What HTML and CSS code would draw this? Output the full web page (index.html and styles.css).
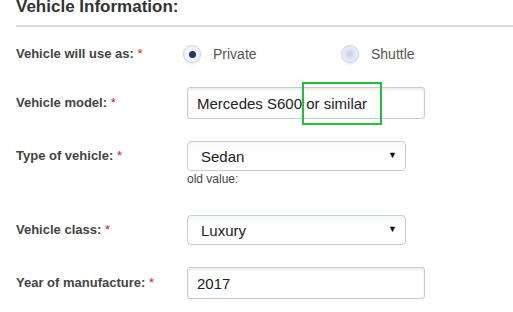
FILE: index.html
```html
<!DOCTYPE html>
<html lang="en">
<head>
    <meta charset="UTF-8">
    <meta name="viewport" content="width=device-width, initial-scale=1.0">
    <title>Vehicle Information</title>
    <link rel="stylesheet" href="styles.css">
</head>
<body>
    <div class="section">
        <h2 class="section-title">Vehicle Information:</h2>
        <div class="section-rule"></div>

        <div class="form-row row-radio">
            <label class="form-label">Vehicle will use as: <span class="req">*</span></label>
            <div class="radio-group">
                <label class="radio-option">
                    <span class="radio checked"></span>
                    <span class="radio-text">Private</span>
                </label>
                <label class="radio-option">
                    <span class="radio"></span>
                    <span class="radio-text">Shuttle</span>
                </label>
            </div>
        </div>

        <div class="form-row row-input">
            <label class="form-label" for="model">Vehicle model: <span class="req">*</span></label>
            <div class="field">
                <input type="text" id="model" class="text-input" value="Mercedes S600 or similar">
                <span class="highlight"></span>
            </div>
        </div>

        <div class="form-row row-select row-old">
            <label class="form-label" for="type">Type of vehicle: <span class="req">*</span></label>
            <div class="field">
                <span class="select-wrap">
                    <select id="type" class="select-input">
                        <option>Sedan</option>
                    </select>
                </span>
                <div class="old-value">old value:</div>
            </div>
        </div>

        <div class="form-row row-select">
            <label class="form-label" for="class">Vehicle class: <span class="req">*</span></label>
            <div class="field">
                <span class="select-wrap">
                    <select id="class" class="select-input">
                        <option>Luxury</option>
                    </select>
                </span>
            </div>
        </div>

        <div class="form-row row-input">
            <label class="form-label" for="year">Year of manufacture: <span class="req">*</span></label>
            <div class="field">
                <input type="text" id="year" class="text-input" value="2017">
            </div>
        </div>
    </div>
</body>
</html>
```

FILE: styles.css
```css
body {
    margin: 0;
    background: #fff;
    font-family: "Liberation Sans", Arial, sans-serif;
    color: #444;
}
.section {
    padding-left: 16px;
}
.section-title {
    margin: -2px 0 0;
    font-size: 17px;
    line-height: 17px;
    font-weight: bold;
    color: #333;
}
.section-rule {
    height: 2px;
    margin-top: 10px;
    background: #d9d9d9;
}
.form-row {
    display: flex;
    align-items: flex-start;
    margin-bottom: 22px;
}
.row-radio {
    margin-top: 16px;
}
.row-old {
    margin-bottom: 28px;
}
.form-label {
    flex: none;
    width: 171px;
    font-size: 13px;
    font-weight: bold;
    color: #444;
}
.row-radio .form-label {
    line-height: 22px;
}
.row-input .form-label {
    line-height: 32px;
}
.row-select .form-label {
    line-height: 30px;
}
.req {
    color: #e8121b;
    font-weight: normal;
}
.radio-group {
    display: flex;
    height: 22px;
    align-items: center;
}
.radio-option {
    display: flex;
    align-items: center;
    width: 162px;
    margin-left: -4px;
}
.radio {
    width: 18px;
    height: 18px;
    box-sizing: border-box;
    border-radius: 50%;
    border: 1px solid #cdd6ea;
    background: radial-gradient(circle, #c3cde6 0, #dfe5f3 45%, #f6f8fc 100%);
    box-shadow: 0 1px 2px rgba(120, 140, 190, 0.25);
    display: flex;
    align-items: center;
    justify-content: center;
}
.radio.checked {
    background: radial-gradient(circle, #fff 0, #f1f4fa 60%, #e1e7f3 100%);
}
.radio.checked::after {
    content: "";
    width: 7px;
    height: 7px;
    border-radius: 50%;
    background: #1d3484;
}
.radio-text {
    margin-left: 12px;
    font-size: 14px;
    color: #555;
}
.field {
    position: relative;
}
.text-input {
    display: block;
    width: 238px;
    height: 32px;
    box-sizing: border-box;
    padding: 0 9px;
    border: 1px solid #c4ccd8;
    border-radius: 3px;
    box-shadow: inset 0 2px 3px rgba(0, 0, 0, 0.08);
    font-family: "Liberation Sans", Arial, sans-serif;
    font-size: 15px;
    color: #222;
    outline: none;
}
.highlight {
    position: absolute;
    left: 115px;
    top: -5px;
    width: 80px;
    height: 43px;
    box-sizing: border-box;
    border: 2px solid #22c03a;
}
.select-wrap {
    position: relative;
    display: block;
    width: 219px;
}
.select-wrap::after {
    content: "▼";
    position: absolute;
    right: 9px;
    top: 9px;
    font-size: 9px;
    color: #111;
    pointer-events: none;
}
.select-input {
    display: block;
    width: 219px;
    height: 30px;
    box-sizing: border-box;
    padding: 0 13px;
    -webkit-appearance: none;
    appearance: none;
    border: 1px solid #c4ccd8;
    border-radius: 4px;
    background: linear-gradient(#f6f7f9, #fff 40%);
    font-family: "Liberation Sans", Arial, sans-serif;
    font-size: 15px;
    color: #222;
    outline: none;
}
.old-value {
    font-size: 12px;
    line-height: 16px;
    color: #444;
}
```
